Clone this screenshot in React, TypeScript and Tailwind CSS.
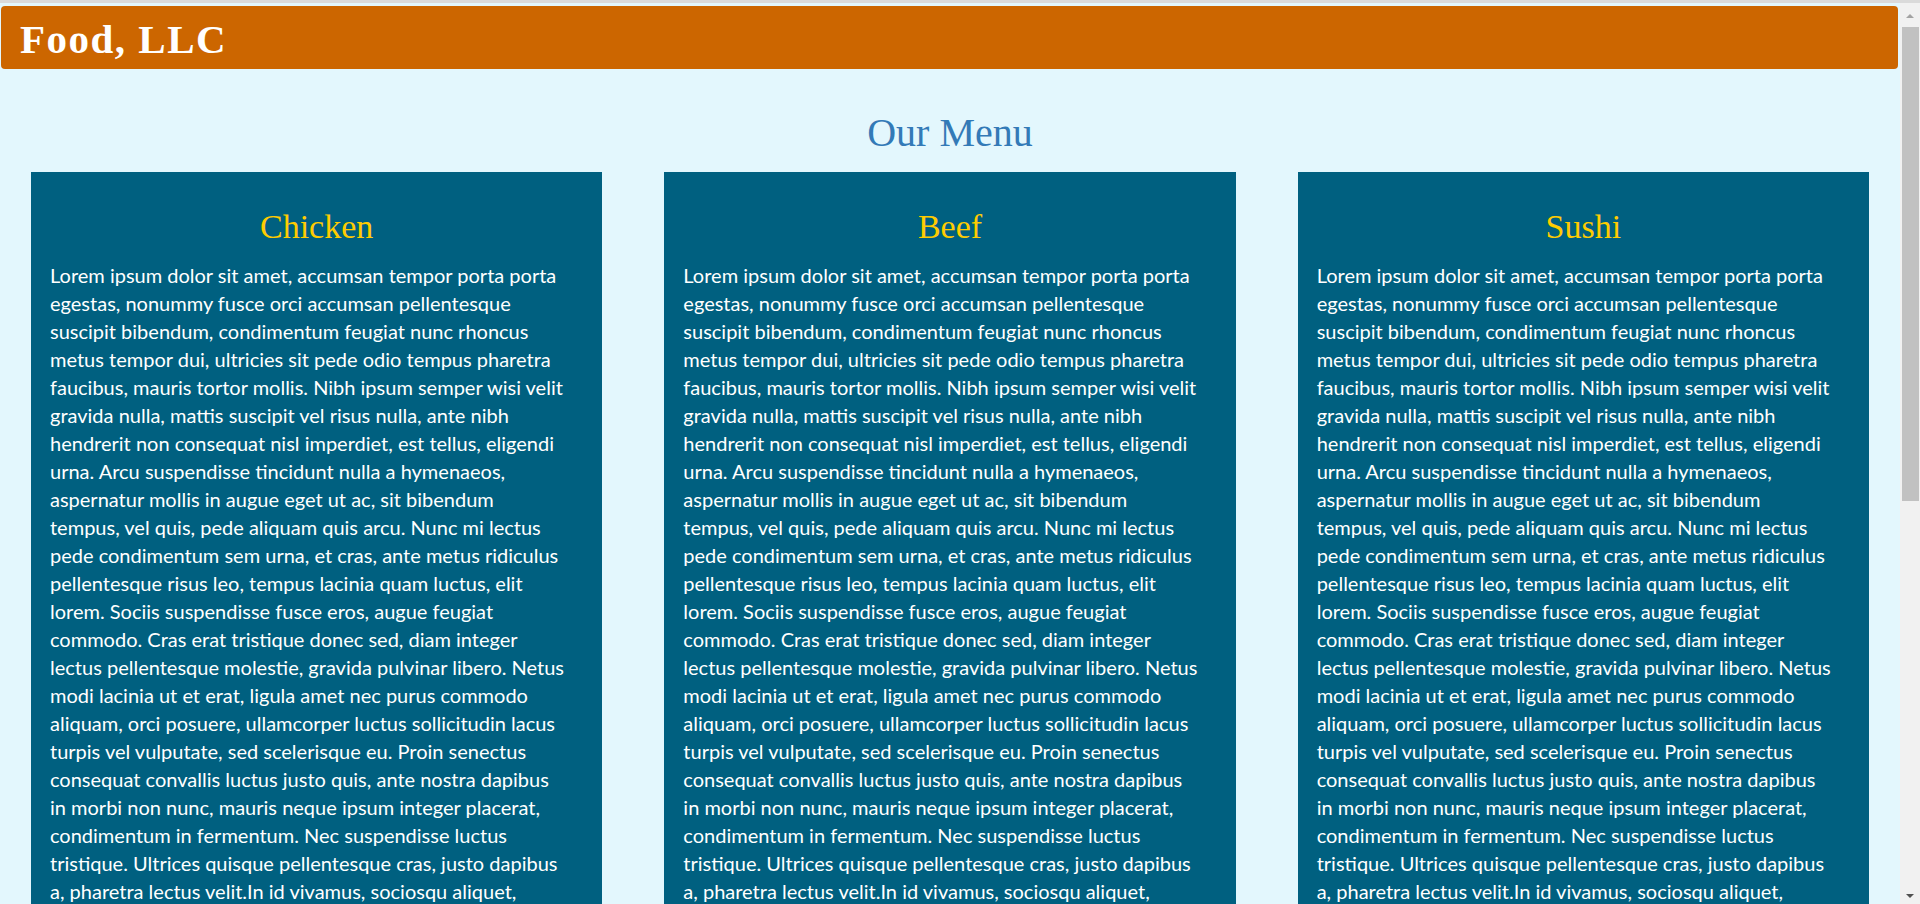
const LINES = [
  "Lorem ipsum dolor sit amet, accumsan tempor porta porta",
  "egestas, nonummy fusce orci accumsan pellentesque",
  "suscipit bibendum, condimentum feugiat nunc rhoncus",
  "metus tempor dui, ultricies sit pede odio tempus pharetra",
  "faucibus, mauris tortor mollis. Nibh ipsum semper wisi velit",
  "gravida nulla, mattis suscipit vel risus nulla, ante nibh",
  "hendrerit non consequat nisl imperdiet, est tellus, eligendi",
  "urna. Arcu suspendisse tincidunt nulla a hymenaeos,",
  "aspernatur mollis in augue eget ut ac, sit bibendum",
  "tempus, vel quis, pede aliquam quis arcu. Nunc mi lectus",
  "pede condimentum sem urna, et cras, ante metus ridiculus",
  "pellentesque risus leo, tempus lacinia quam luctus, elit",
  "lorem. Sociis suspendisse fusce eros, augue feugiat",
  "commodo. Cras erat tristique donec sed, diam integer",
  "lectus pellentesque molestie, gravida pulvinar libero. Netus",
  "modi lacinia ut et erat, ligula amet nec purus commodo",
  "aliquam, orci posuere, ullamcorper luctus sollicitudin lacus",
  "turpis vel vulputate, sed scelerisque eu. Proin senectus",
  "consequat convallis luctus justo quis, ante nostra dapibus",
  "in morbi non nunc, mauris neque ipsum integer placerat,",
  "condimentum in fermentum. Nec suspendisse luctus",
  "tristique. Ultrices quisque pellentesque cras, justo dapibus",
  "a, pharetra lectus velit.In id vivamus, sociosqu aliquet,",
  "sed vestibulum ut mauris, dolor orci vitae nunc, est morbi",
  "nec est ut, nec vel sed.",
];

const items = ["Chicken", "Beef", "Sushi"];

const serif = { fontFamily: '"Liberation Serif", "DejaVu Serif", serif' };

export default function App() {
  return (
    <div className="flex h-screen flex-col overflow-hidden bg-[#e3f7fd]">
      <div className="h-[3px] shrink-0 bg-[#dadada]" />
      <div className="flex min-h-0 flex-1">
        <main className="min-w-0 flex-1 overflow-hidden">
          <header className="mt-[3px] ml-[1px] mr-[2px] h-[63px] rounded-[4px] bg-[#cc6600] pl-[19px] pt-[4px]">
            <h1
              className="text-[41px] font-bold leading-[59px] tracking-[1.5px] text-white"
              style={serif}
            >
              Food, LLC
            </h1>
          </header>
          <h2
            className="mt-[42px] text-center text-[40px] leading-[44px] text-[#337ab7]"
            style={serif}
          >
            Our Menu
          </h2>
          <div className="mt-[17px] grid grid-cols-3">
            {items.map((name) => (
              <div key={name} className="px-[31px]">
                <div className="bg-[#006080] px-[19px] pt-[36px] pb-6">
                  <h3
                    className="text-center text-[34px] leading-[37px] text-[#ffcc00]"
                    style={serif}
                  >
                    {name}
                  </h3>
                  <p
                    className="mt-4 text-[20px] leading-[28px] text-white"
                    style={{ fontFamily: 'Lato, "Open Sans", sans-serif' }}
                  >
                    {LINES.map((line, i) => (
                      <span key={i} className="block whitespace-nowrap">
                        {line}
                      </span>
                    ))}
                  </p>
                </div>
              </div>
            ))}
          </div>
        </main>
        <div className="flex w-[20px] shrink-0 flex-col items-center bg-[#f1f1f1] pt-[11px] pb-[6px]">
          <div className="h-0 w-0 border-x-[4px] border-b-[4px] border-x-transparent border-b-[#a3a3a3]" />
          <div className="mt-[9px] ml-[1px] h-[474px] w-[17px] bg-[#c1c1c1]" />
          <div className="flex-1" />
          <div className="h-0 w-0 border-x-[4px] border-t-[4px] border-x-transparent border-t-[#505050]" />
        </div>
      </div>
    </div>
  );
}
